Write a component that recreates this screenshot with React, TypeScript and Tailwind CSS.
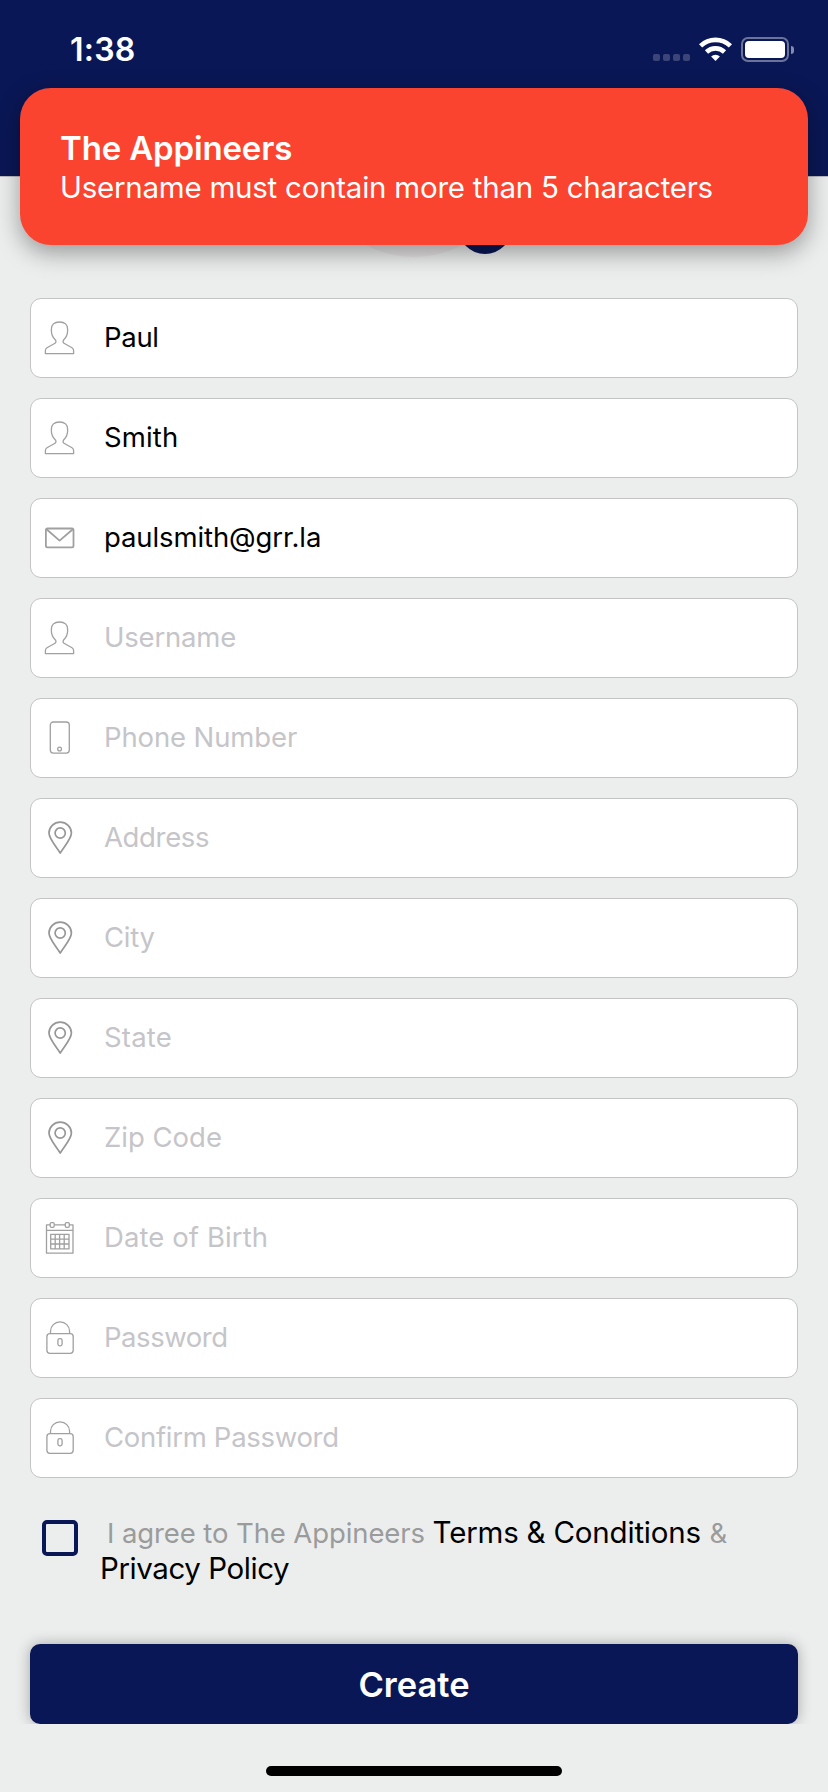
import type { ReactNode } from "react";

function Icon({ children, width = 1.3, color = "#a0a0a0" }: { children: ReactNode; width?: number; color?: string }) {
  return (
    <svg className="size-10 shrink-0" viewBox="0 0 40 40" fill="none" stroke={color} strokeWidth={width} strokeLinejoin="round">
      {children}
    </svg>
  );
}

const PersonIcon = () => (
  <Icon>
    <path d="M19.5 4C14 4 11.4 7 11.4 11V13C11.4 17 13.5 20 15 21.5C16.5 23 16 24.5 15 25.2L7 29.8C5.7 30.6 5.4 31.2 5.4 32.5V35.7H33.6V32.5C33.6 31.2 33.3 30.6 32 29.8L24 25.2C23 24.5 22.5 23 24 21.5C25.5 20 27.6 17 27.6 13V11C27.6 7 25 4 19.5 4Z" />
  </Icon>
);

const MailIcon = () => (
  <Icon width={1.8}>
    <rect x="5.9" y="10.5" width="27.6" height="18.8" rx="1.6" />
    <path d="M6.5 11.2L19.6 22.6L32.8 11.2" />
  </Icon>
);

const PhoneIcon = () => (
  <Icon>
    <rect x="10.3" y="4" width="19" height="31.1" rx="3" />
    <circle cx="19.6" cy="31" r="1.9" />
  </Icon>
);

const PinIcon = () => (
  <Icon width={1.7} color="#979797">
    <path d="M20.2 35C17 29.5 9 21 9 15A11.2 10.9 0 0 1 31.4 15C31.4 21 23.4 29.5 20.2 35Z" />
    <circle cx="20.2" cy="15" r="5.1" />
  </Icon>
);

const CalendarIcon = () => (
  <Icon>
    <path d="M10 6.8H6.5V35.2H33V6.8H29.4M14.2 6.8H25.2M6.5 12.4H33" />
    <rect x="10.2" y="4.6" width="4" height="4.7" rx="1.2" />
    <rect x="25.3" y="4.6" width="4" height="4.7" rx="1.2" />
    <path d="M10.7 16.4H29V30.8H10.7ZM15.2 16.4V30.8M19.6 16.4V30.8M24.2 16.4V30.8M10.7 21.1H29M10.7 26H29" />
  </Icon>
);

const LockIcon = () => (
  <Icon>
    <rect x="6.9" y="15.7" width="26.3" height="19.6" rx="3" />
    <path d="M10.5 15.7V13.2A9.5 9.3 0 0 1 29.6 13.2V15.7" />
    <rect x="17.9" y="20.6" width="4.2" height="7.2" rx="1.8" />
  </Icon>
);

const fields = [
  { icon: PersonIcon, text: "Paul", filled: true, track: "tracking-[-0.3px]" },
  { icon: PersonIcon, text: "Smith", filled: true, track: "tracking-[0.15px]" },
  { icon: MailIcon, text: "paulsmith@grr.la", filled: true, track: "tracking-[-0.1px]" },
  { icon: PersonIcon, text: "Username", filled: false, track: "tracking-[-0.2px]" },
  { icon: PhoneIcon, text: "Phone Number", filled: false, track: "tracking-[-0.12px]" },
  { icon: PinIcon, text: "Address", filled: false, track: "tracking-[-0.35px]" },
  { icon: PinIcon, text: "City", filled: false, track: "tracking-[-0.3px]" },
  { icon: PinIcon, text: "State", filled: false, track: "tracking-[0.2px]" },
  { icon: PinIcon, text: "Zip Code", filled: false, track: "tracking-[0px]" },
  { icon: CalendarIcon, text: "Date of Birth", filled: false, track: "tracking-[0.1px]" },
  { icon: LockIcon, text: "Password", filled: false, track: "tracking-[-0.45px]" },
  { icon: LockIcon, text: "Confirm Password", filled: false, track: "tracking-[-0.3px]" },
];

function StatusBar() {
  return (
    <header className="flex h-[176px] shrink-0 items-start justify-between bg-[#0a1756] pl-[70px] pr-[34px] pt-[37px]">
      <span className="mt-[-7px] text-[32px] font-semibold leading-[40px] tracking-[0.2px] text-white">1:38</span>
      <div className="flex items-start">
        <div className="mt-[17px] flex gap-[3px]">
          <span className="size-[7px] rounded-[2px] bg-white/20" />
          <span className="size-[7px] rounded-[2px] bg-white/20" />
          <span className="size-[7px] rounded-[2px] bg-white/20" />
          <span className="size-[7px] rounded-[2px] bg-white/20" />
        </div>
        <svg className="ml-[9px] h-6 w-[33px]" viewBox="0 0 33 24" fill="none" stroke="#fff" strokeWidth="4.6">
          <path d="M1.6 8.9A21.5 21.5 0 0 1 31.4 8.9" />
          <path d="M7.5 15A13 13 0 0 1 25.5 15" />
          <path d="M16.5 24L12.1 19.6A6.2 6.2 0 0 1 20.9 19.6Z" fill="#fff" stroke="none" />
        </svg>
        <div className="ml-[9px] flex h-[25px] w-12 rounded-[7px] border-2 border-white/40 p-[2px]">
          <div className="flex-1 rounded-[4px] bg-white" />
        </div>
        <div className="ml-[2px] mt-[9px] h-2 w-[3px] rounded-r-full bg-white/50" />
      </div>
    </header>
  );
}

export default function App() {
  return (
    <div className="relative flex h-[1792px] w-[828px] flex-col overflow-hidden bg-[#eceeee] font-['Inter','Liberation_Sans',sans-serif]">
      <StatusBar />

      <div className="flex h-[122px] shrink-0 justify-center overflow-hidden border-t border-[#b9bbbe]">
        <div className="relative -mt-[120px] size-[200px] rounded-full bg-[#e6e3e3]">
          <div className="absolute bottom-[3px] right-[2px] size-[54px] rounded-full bg-[#0a1756]" />
        </div>
      </div>

      <main className="flex flex-col gap-5 px-[30px]">
        {fields.map(({ icon: FieldIcon, text, filled, track }) => (
          <label key={text} className="flex h-20 items-center rounded-[11px] border border-[#c4c4c4] bg-white pl-[9px]">
            <FieldIcon />
            <span className={`mb-0.5 ml-6 text-[27.5px] leading-8 ${track} ${filled ? "text-black" : "text-[#c5c5c9]"}`}>{text}</span>
          </label>
        ))}
      </main>

      <div className="mt-[35px] flex h-[84px] shrink-0 items-start pl-[42px]">
        <span className="mt-[7px] size-9 shrink-0 rounded-[5px] border-4 border-[#0a1756]" />
        <p className="ml-[22px] mt-[1.5px] text-[27.5px] leading-[35px] tracking-[-0.1px] text-[#9b9b9b]">
          <span className="ml-[7px]">I agree to The Appineers </span>
          <span className="text-[29.5px] tracking-[-0.2px] text-black">Terms &amp; Conditions</span>
          <span className="ml-px"> &amp;</span>
          <br />
          <span className="text-[29.5px] tracking-[-0.43px] text-black">Privacy Policy</span>
        </p>
      </div>

      <div className="mt-[27px] shrink-0 overflow-hidden px-[30px] pt-5">
        <button className="block h-20 w-full rounded-[10px] bg-[#0a1756] pt-0.5 text-[34.5px] font-semibold tracking-[0px] text-white shadow-[0_0_14px_rgba(0,0,0,0.3)]">
          Create
        </button>
      </div>
      <div className="mx-auto mt-[42px] h-[10px] w-[296px] shrink-0 rounded-full bg-black" />

      <div className="absolute left-5 top-[88px] h-[157px] w-[788px] rounded-[31px] bg-[#fb4430] pl-10 pt-10 text-white shadow-[0_8px_24px_rgba(0,0,0,0.36)]">
        <h1 className="text-[33px] font-semibold leading-10 tracking-[-0.15px]">The Appineers</h1>
        <p className="text-[29.5px] leading-[38px] tracking-[-0.24px]">Username must contain more than 5 characters</p>
      </div>
    </div>
  );
}
